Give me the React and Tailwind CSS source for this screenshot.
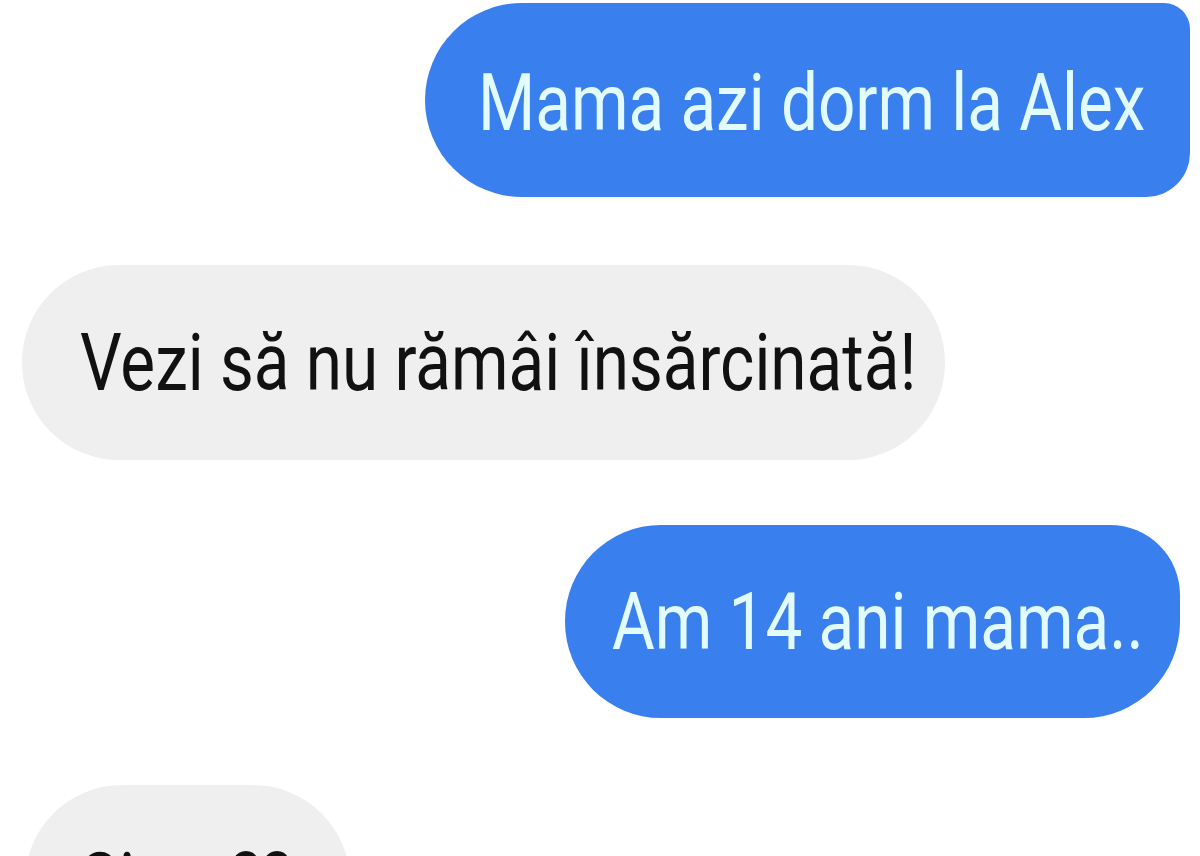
export default function App() {
  const font = { fontFamily: 'Roboto, "Liberation Sans", sans-serif' };

  return (
    <div className="w-[1200px] h-[856px] overflow-hidden bg-white" style={font}>
      <div className="flex flex-col pt-[3px]">
        {/* outgoing */}
        <div className="flex justify-end pr-[10px]">
          <div className="w-[765px] h-[194px] bg-[#3a7fee] rounded-l-[97px] rounded-tr-[26px] rounded-br-[44px] flex items-center pl-[53px] overflow-hidden">
            <span className="inline-block whitespace-nowrap text-[80px] leading-none text-[#e2fbfd] scale-x-[0.82] origin-left translate-y-[3px]">
              Mama azi dorm la Alex
            </span>
          </div>
        </div>

        {/* incoming */}
        <div className="flex justify-start pl-[22px] mt-[68px]">
          <div className="w-[923px] h-[195px] bg-[#efefef] rounded-[97px] flex items-center pl-[58px] overflow-hidden">
            <span className="inline-block whitespace-nowrap text-[80px] leading-none text-[#111111] scale-x-[0.82] origin-left">
              Vezi să nu rămâi însărcinată!
            </span>
          </div>
        </div>

        {/* outgoing */}
        <div className="flex justify-end pr-[20px] mt-[65px]">
          <div className="w-[615px] h-[193px] bg-[#3a7fee] rounded-l-[96px] rounded-tr-[70px] rounded-br-[96px] flex items-center pl-[47px] overflow-hidden">
            <span className="inline-block whitespace-nowrap text-[80px] leading-none text-[#e2fbfd] scale-x-[0.82] origin-left">
              Am 14 ani mama..
            </span>
          </div>
        </div>

        {/* incoming, cut off */}
        <div className="flex justify-start pl-[25px] mt-[67px]">
          <div className="w-[325px] h-[194px] bg-[#efefef] rounded-[97px] flex items-center pl-[55px] overflow-hidden">
            <span className="inline-block whitespace-nowrap text-[80px] leading-none text-[#111111] scale-x-[0.82] origin-left">
              Sigur??
            </span>
          </div>
        </div>
      </div>
    </div>
  );
}
